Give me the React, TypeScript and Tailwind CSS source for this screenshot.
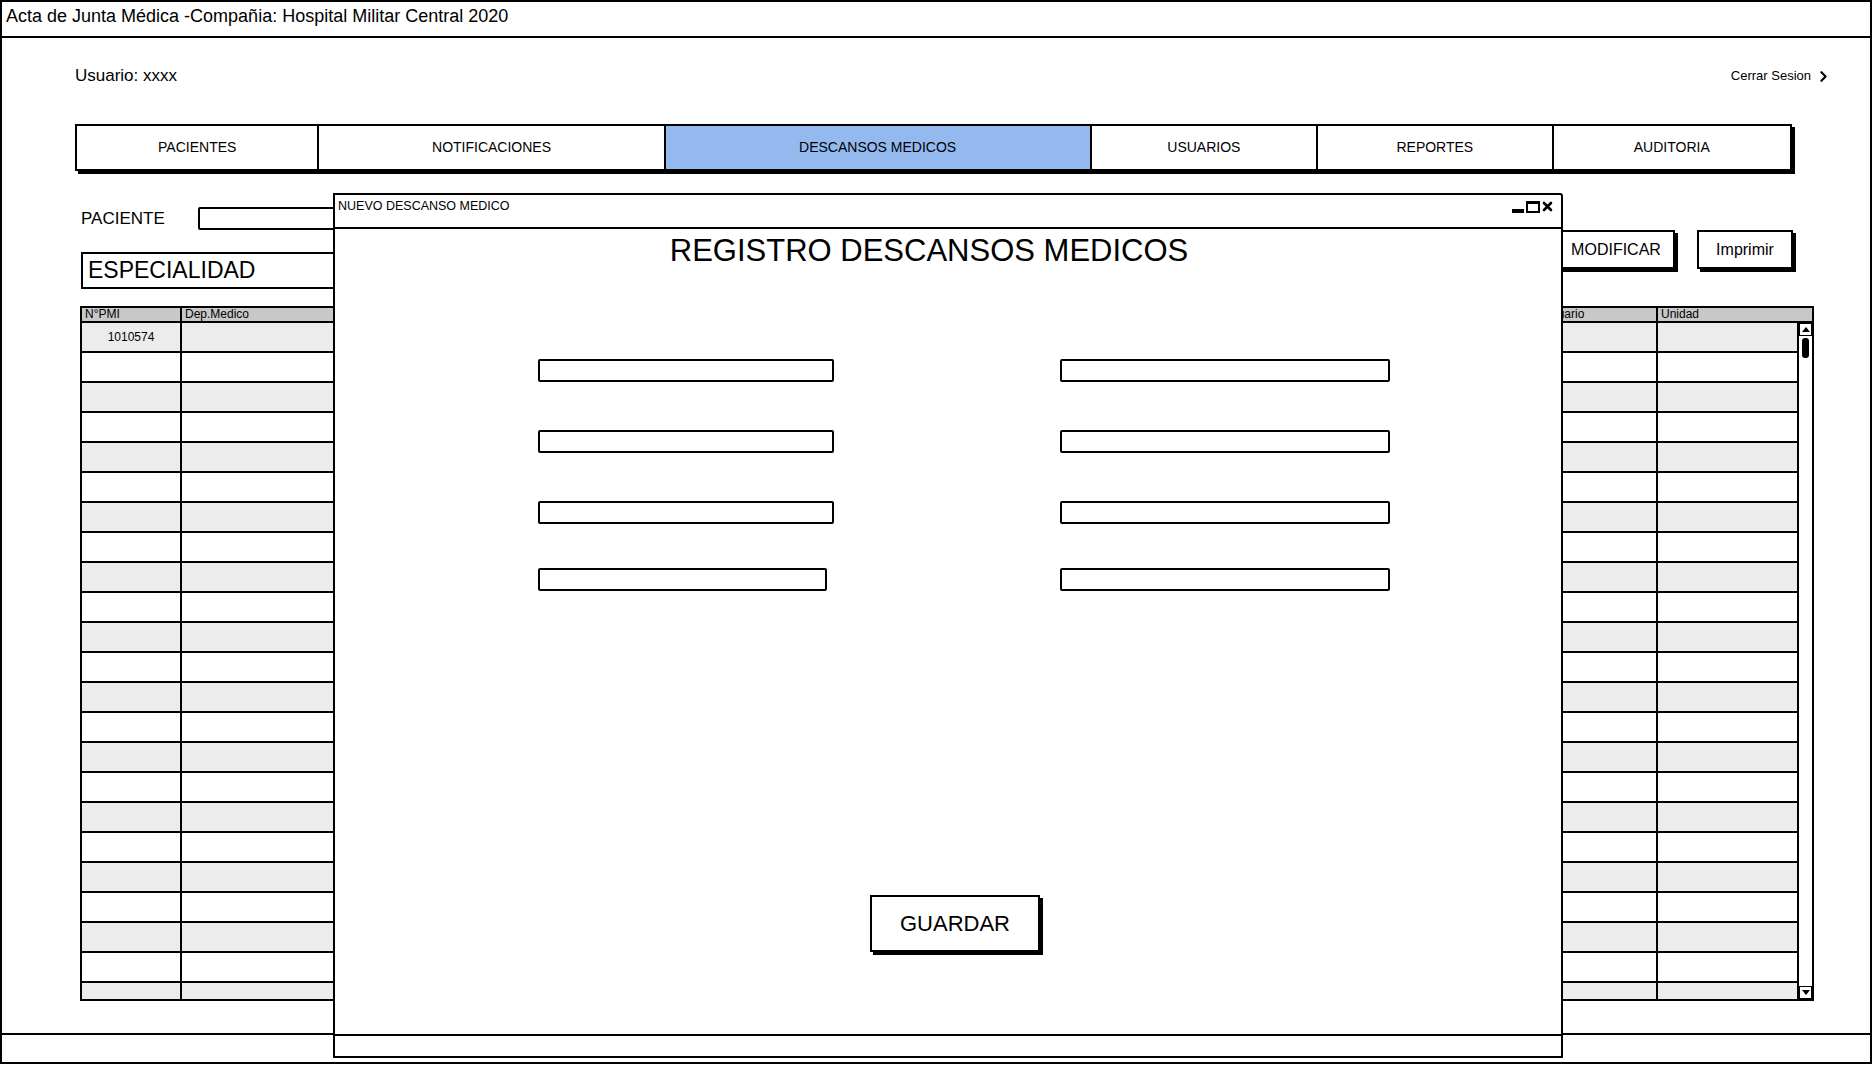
import { ChevronRight } from "lucide-react";

const TABS = [
  { title: "PACIENTES", width: "w-[243px]" },
  { title: "NOTIFICACIONES", width: "w-[347px]" },
  { title: "DESCANSOS MEDICOS", width: "w-[427px]", active: true },
  { title: "USUARIOS", width: "w-[227px]" },
  { title: "REPORTES", width: "w-[236px]" },
  { title: "AUDITORIA", width: "w-[237px]" },
];

const COLUMNS = ["N°PMI", "Dep.Medico", "Paciente", "Fecha Inicio", "Fecha Fin", "Días", "Usuario", "Unidad"];
const GRID = "grid grid-cols-[100px_300px_358px_250px_250px_200px_118px_1fr]";

// modal inputs: left column width and top margin of each row
const FIELD_ROWS = [
  { mt: "mt-[90px]", left: "w-[296px]" },
  { mt: "mt-[48px]", left: "w-[296px]" },
  { mt: "mt-[48px]", left: "w-[296px]" },
  { mt: "mt-[44px]", left: "w-[289px]" },
];

function WindowControls() {
  return (
    <svg width="44" height="14" viewBox="0 0 44 14" aria-hidden="true">
      <rect x="0" y="9" width="12" height="4" fill="#000" />
      <rect x="15" y="2" width="12" height="10" fill="none" stroke="#000" strokeWidth="2" />
      <rect x="15" y="1" width="12" height="3" fill="#000" />
      <path d="M32 3 L39 10 M39 3 L32 10" stroke="#000" strokeWidth="2.6" strokeLinecap="round" />
    </svg>
  );
}

function DataTable() {
  const rows = Array.from({ length: 23 }, (_, i) => i);

  return (
    <div className="ml-[78px] mt-[17px] flex h-[695px] w-[1734px] flex-col overflow-hidden border-2 border-black">
      <div className={`${GRID} h-[15px] border-b-2 border-black bg-[#c8c8c8] text-[12px] leading-[13px]`}>
        {COLUMNS.map((col, i) => (
          <div key={col} className={i < COLUMNS.length - 1 ? "border-r-2 border-black pl-[3px]" : "pl-[3px]"}>
            {col}
          </div>
        ))}
      </div>
      <div className="flex min-h-0 flex-1">
        <div className="min-h-0 flex-1 overflow-hidden">
          {rows.map((r) => (
            <div
              key={r}
              className={`${GRID} h-[30px] border-b-2 border-black ${r % 2 === 0 ? "bg-[#ececec]" : "bg-white"}`}
            >
              {COLUMNS.map((col, i) => (
                <div
                  key={col}
                  className={
                    i < COLUMNS.length - 1
                      ? "flex items-center justify-center border-r-2 border-black text-[12px]"
                      : "text-[12px]"
                  }
                >
                  {r === 0 && i === 0 ? "1010574" : ""}
                </div>
              ))}
            </div>
          ))}
        </div>
        {/* scrollbar */}
        <div className="flex w-[15px] flex-col items-center border-l-2 border-black bg-white">
          <div className="flex h-[13px] w-[13px] items-center justify-center border border-black">
            <div className="h-0 w-0 border-x-[4px] border-b-[5px] border-x-transparent border-b-black" />
          </div>
          <div className="mt-[2px] h-[20px] w-[7px] rounded-[3px] bg-black" />
          <div className="flex-1" />
          <div className="flex h-[13px] w-[13px] items-center justify-center border border-black">
            <div className="h-0 w-0 border-x-[4px] border-t-[5px] border-x-transparent border-t-black" />
          </div>
        </div>
      </div>
    </div>
  );
}

function NuevoDescansoModal() {
  return (
    <div className="absolute left-[333px] top-[193px] flex h-[865px] w-[1230px] flex-col rounded-tr-[3px] border-2 border-black bg-white">
      <div className="flex h-[34px] shrink-0 items-start justify-between border-b-2 border-black pl-[3px] pr-[5px] pt-[4px]">
        <span className="text-[12.5px] leading-[15px]">NUEVO DESCANSO MEDICO</span>
        <div className="pt-[1px]">
          <WindowControls />
        </div>
      </div>

      <div className="flex flex-1 flex-col">
        <h1 className="pr-[38px] pt-[3px] text-center text-[31px] leading-[37px]">REGISTRO DESCANSOS MEDICOS</h1>

        <div className="ml-[203px]">
          {FIELD_ROWS.map((row, i) => (
            <div key={i} className={`${row.mt} flex gap-[226px]`}>
              <div className={`h-[23px] ${row.left} rounded-[2px] border-2 border-black`} />
              <div className={`h-[23px] w-[330px] rounded-[2px] border-2 border-black ${i === 3 ? "ml-[7px]" : ""}`} />
            </div>
          ))}
        </div>

        <div className="mt-auto mb-[82px] flex justify-center pl-[14px]">
          <button className="h-[57px] w-[170px] border-2 border-black bg-white text-[22px] shadow-[3px_3px_0_0_#000]">
            GUARDAR
          </button>
        </div>
      </div>

      <div className="h-[22px] shrink-0 border-t-2 border-black" />
    </div>
  );
}

export default function App() {
  return (
    <div className="relative h-[1065px] w-[1873px] bg-white font-['Liberation_Sans',Arial,sans-serif] text-black">
      <div className="flex h-[1064px] w-[1872px] flex-col border-2 border-black">
        {/* window title */}
        <div className="flex h-[36px] shrink-0 items-start border-b-2 border-black pl-[4px] pt-[3px]">
          <span className="text-[18px] leading-[22px]">Acta de Junta Médica -Compañia: Hospital Militar Central 2020</span>
        </div>

        <div className="flex flex-1 flex-col">
          {/* user row */}
          <div className="mt-[28px] flex h-[20px] items-center justify-between pl-[73px] pr-[38px]">
            <span className="text-[17px]">Usuario: xxxx</span>
            <span className="flex items-center gap-[4px] text-[13px]">
              Cerrar Sesion
              <ChevronRight size={17} strokeWidth={3} />
            </span>
          </div>

          {/* tabs */}
          <div className="ml-[73px] mt-[38px] flex h-[47px] w-[1717px] border-2 border-black shadow-[3px_3px_0_0_#000]">
            {TABS.map((tab, i) => (
              <div
                key={tab.title}
                className={`flex items-center justify-center text-[14px] ${tab.width} ${
                  i < TABS.length - 1 ? "border-r-2 border-black" : ""
                } ${tab.active ? "bg-[#93b9ef]" : "bg-white"}`}
              >
                {tab.title}
              </div>
            ))}
          </div>

          {/* filters + actions */}
          <div className="flex justify-between pr-[77px]">
            <div className="flex flex-col">
              <div className="ml-[79px] mt-[35px] flex items-center">
                <span className="w-[117px] text-[17px]">PACIENTE</span>
                <div className="h-[23px] w-[420px] rounded-[2px] border-2 border-black" />
              </div>
              <div className="ml-[79px] mt-[20px] flex h-[37px] w-[536px] items-center border-2 border-black pl-[5px] text-[23px]">
                ESPECIALIDAD
              </div>
            </div>
            <div className="mt-[59px] flex gap-[22px]">
              <button className="h-[39px] w-[118px] border-2 border-black bg-white text-[16px] shadow-[3px_3px_0_0_#000]">
                MODIFICAR
              </button>
              <button className="h-[39px] w-[96px] border-2 border-black bg-white text-[16px] shadow-[3px_3px_0_0_#000]">
                Imprimir
              </button>
            </div>
          </div>

          <DataTable />
        </div>

        {/* status bar */}
        <div className="h-[29px] shrink-0 border-t-2 border-black" />
      </div>

      <NuevoDescansoModal />
    </div>
  );
}
